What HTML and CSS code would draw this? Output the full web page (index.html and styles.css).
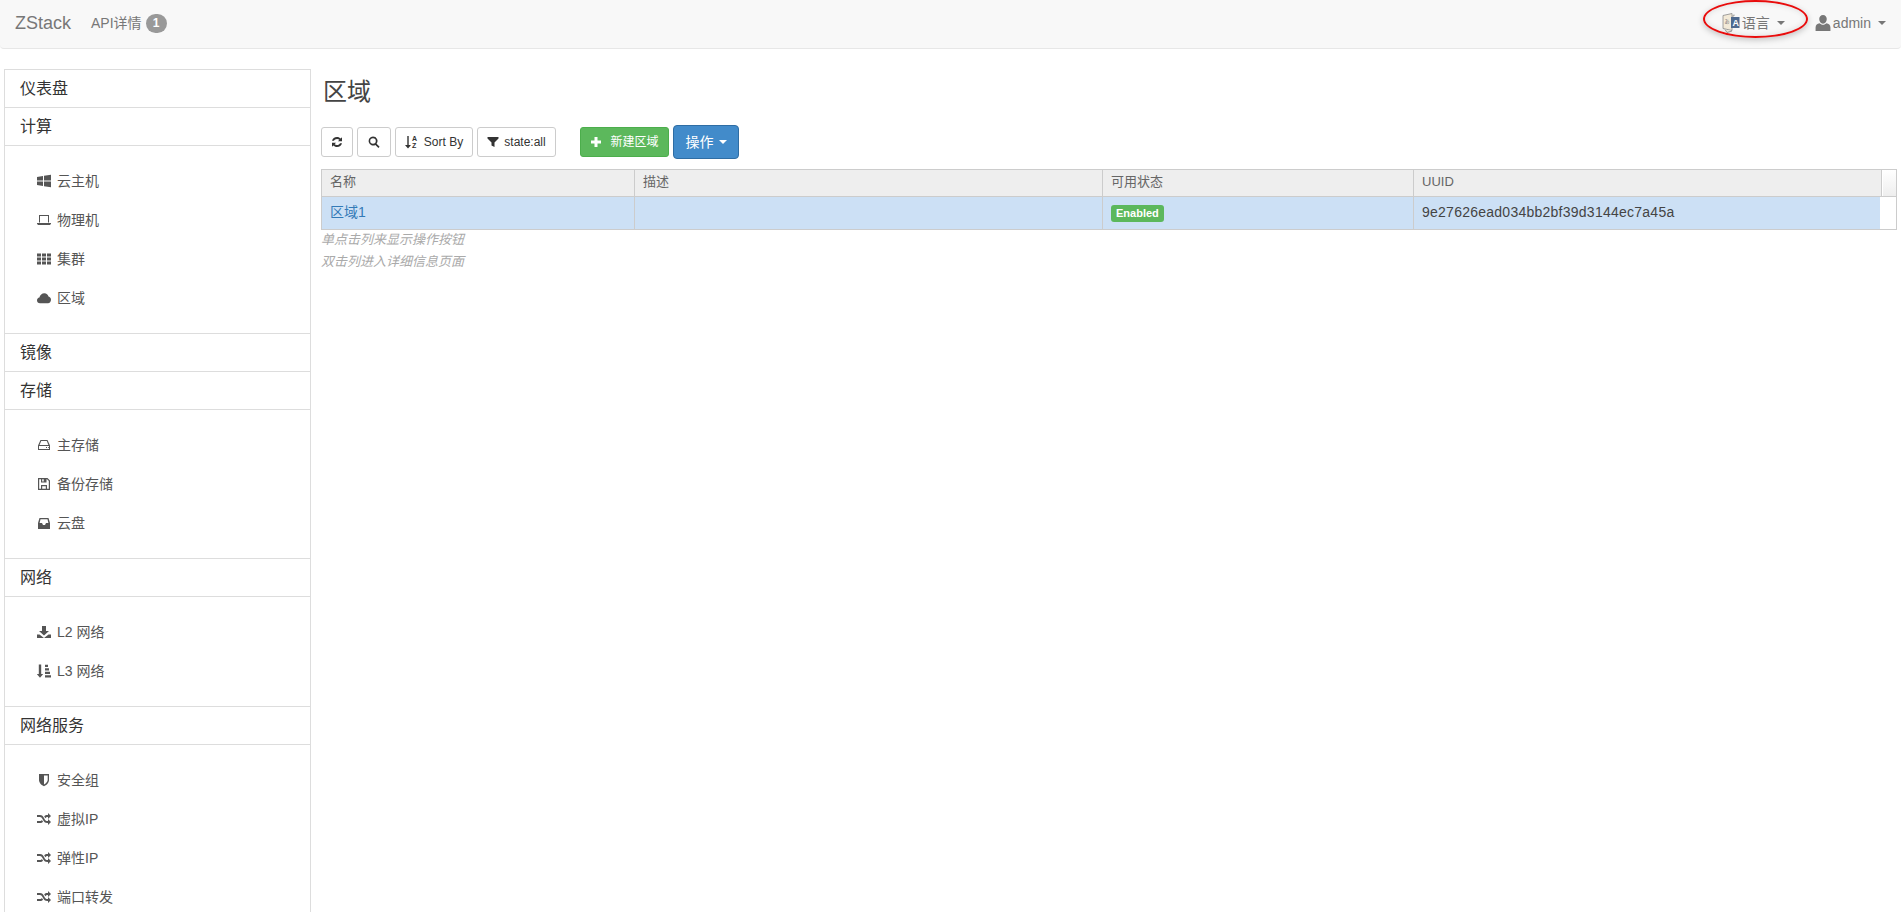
FILE: index.html
```html
<!DOCTYPE html>
<html lang="zh">
<head>
<meta charset="utf-8">
<title>ZStack</title>
<link rel="stylesheet" href="styles.css">
</head>
<body>
<svg class="sprites" width="0" height="0" aria-hidden="true">
  <symbol id="i-win" viewBox="0 0 14 14"><path d="M0 3l6-1v4.500H0zM7 1.800L14 .8v5.700H7zM0 7.500h6V12l-6-1zM7 7.500h7v5.700l-7-1z"/></symbol>
  <symbol id="i-laptop" viewBox="0 0 14 14"><path d="M2 2h10v7.500H11V3H3v6.500H2zM0 10h14v.8l-1 1.200H1L0 10.800z"/></symbol>
  <symbol id="i-th" viewBox="0 0 14 14"><path d="M0 1.500h4v3H0zM5 1.500h4v3H5zM10 1.500h4v3h-4zM0 5.500h4v3H0zM5 5.500h4v3H5zM10 5.500h4v3h-4zM0 9.500h4v3H0zM5 9.500h4v3H5zM10 9.500h4v3h-4z"/></symbol>
  <symbol id="i-cloud" viewBox="0 0 14 14"><path d="M3 12.200C1.200 12.200 0 11 0 9.400c0-1.500 1-2.600 2.400-2.800C3 4 5 2.300 7.300 2.300c2.200 0 3.700 1.300 4.200 3.300 1.500.3 2.500 1.700 2.500 3.200 0 1.900-1.300 3.400-3 3.400z"/></symbol>
  <symbol id="i-hdd" viewBox="0 0 14 14"><path d="M3.500 2h7L13 7.500V12H1V7.500zM4.200 3L2.600 7h8.800L9.800 3zM2 8v3h10V8zM9 9h1v1H9zM11 9h.8v1H11z"/></symbol>
  <symbol id="i-save" viewBox="0 0 14 14"><path fill-rule="evenodd" d="M1 1h9.500L13 3.500V13H1zM2.200 2.200v9.600H4V8h6v3.800h1.800V4L10 2.200H9.500V5.500H4V2.200zM5.200 2.200v2.200h1.500V2.200zM5.200 9.200v2.600h3.600V9.200z"/></symbol>
  <symbol id="i-inbox" viewBox="0 0 14 14"><path fill-rule="evenodd" d="M2.500 2h9L13 7v6H1V7zM3.500 3.200L2.600 7H5l1 2h2l1-2h2.400l-.9-3.800z"/></symbol>
  <symbol id="i-down" viewBox="0 0 14 14"><path d="M5 1h4v5h3L7 10.500 2 6h3zM0 9.500h2.500L7 13l4.500-3.500H14V13H0z"/></symbol>
  <symbol id="i-sortattr" viewBox="0 0 14 14"><path d="M1.800 .5h2.400v9.500H6.200L3 13.800 -.2 10h2zM8 .8h3v2.200H8zM8 4.300h4v2.200H8zM8 7.800h5V10H8zM8 11.300h6v2.200H8z"/></symbol>
  <symbol id="i-shield" viewBox="0 0 14 14"><path fill-rule="evenodd" d="M2 1h10v6c0 3-2.800 5.300-5 6.200C4.800 12.300 2 10 2 7zM7 2.400v9.100c1.700-.9 3.700-2.700 3.700-4.500V2.400z"/></symbol>
  <symbol id="i-random" viewBox="0 0 14 14"><path d="M0 3h3c2 0 3 1.200 4 3l.5.900c.8 1.300 1.400 2.100 2.900 2.100H11V7l3 3-3 3v-2h-.6c-2.400 0-3.400-1.300-4.400-3l-.5-.9C4.700 5.800 4.200 5 3 5H0zM0 9h3c.9 0 1.400-.4 1.900-1.100l1.200 1.800C5.300 10.500 4.400 11 3 11H0zM11 1l3 3-3 3V5h-.6c-.9 0-1.500.4-2 1.200L7.200 4.400C8 3.500 9 3 10.400 3H11z"/></symbol>
  <symbol id="i-refresh" viewBox="0 0 12 12"><path d="M1 4.800C1.500 2.600 3.500 1 6 1c1.500 0 2.800.6 3.700 1.500L11 1.200v4H7l1.400-1.400C7.800 3.300 7 3 6 3 4.600 3 3.500 3.700 3 4.800zM11 7.200C10.500 9.400 8.500 11 6 11c-1.500 0-2.800-.6-3.700-1.500L1 10.800v-4h4L3.600 8.200C4.200 8.700 5 9 6 9c1.400 0 2.500-.7 3-1.800z"/></symbol>
  <symbol id="i-search" viewBox="0 0 12 12"><path fill-rule="evenodd" d="M5 .5a4.500 4.500 0 0 1 3.600 7.200l3 3-1.200 1.200-3-3A4.500 4.500 0 1 1 5 .5zM5 2.200a2.800 2.800 0 1 0 0 5.600 2.800 2.800 0 0 0 0-5.600z"/></symbol>
  <symbol id="i-funnel" viewBox="0 0 12 12"><path d="M.5 1h11v1.500L7.500 6.500V11l-3-1.500v-3l-4-4z"/></symbol>
  <symbol id="i-plus" viewBox="0 0 12 12"><path d="M4.500 1h3v3.500H11v3H7.500V11h-3V7.500H1v-3h3.500z"/></symbol>
  <symbol id="i-user" viewBox="0 0 14 14"><path d="M7 0c2 0 3.300 1.500 3.300 3.600S9 7.600 7 7.600 3.700 5.700 3.700 3.600 5 0 7 0zM4 7.200C4.800 8 5.800 8.500 7 8.500s2.200-.5 3-1.300c2 .3 3.500 1.300 3.500 3.800V14H.5v-3C.5 8.500 2 7.500 4 7.200z"/></symbol>
</svg>

<header class="navbar">
  <a class="brand">ZStack</a>
  <a class="nav-link">API详情<span class="badge">1</span></a>
  <div class="nav-right">
    <a class="nav-link lang">
      <svg class="lang-icon" viewBox="0 0 18 20" width="18" height="20"><path class="lang-back" d="M1 2.500l9-2v17l-9-2z"/><path class="lang-back" d="M10 3h2v-1.500M3 16.500l2 3 5-1.500"/><path class="lang-front" d="M9 4h8.500v11H9z"/><text class="lang-a" x="10.500" y="13">A</text><text class="lang-z" x="2.500" y="10">あ</text></svg>
      <span class="nav-text">语言</span><i class="caret"></i>
    </a>
    <a class="nav-link user">
      <svg class="icon user-icon"><use href="#i-user"/></svg>admin<i class="caret"></i>
    </a>
    <span class="annotation"></span>
  </div>
</header>

<div class="layout">
  <nav class="sidebar">
    <div class="side-head">仪表盘</div>
    <div class="side-head">计算</div>
    <ul class="side-body">
      <li><svg class="icon"><use href="#i-win"/></svg>云主机</li>
      <li><svg class="icon"><use href="#i-laptop"/></svg>物理机</li>
      <li><svg class="icon"><use href="#i-th"/></svg>集群</li>
      <li><svg class="icon"><use href="#i-cloud"/></svg>区域</li>
    </ul>
    <div class="side-head">镜像</div>
    <div class="side-head">存储</div>
    <ul class="side-body">
      <li><svg class="icon"><use href="#i-hdd"/></svg>主存储</li>
      <li><svg class="icon"><use href="#i-save"/></svg>备份存储</li>
      <li><svg class="icon"><use href="#i-inbox"/></svg>云盘</li>
    </ul>
    <div class="side-head">网络</div>
    <ul class="side-body">
      <li><svg class="icon"><use href="#i-down"/></svg>L2 网络</li>
      <li><svg class="icon"><use href="#i-sortattr"/></svg>L3 网络</li>
    </ul>
    <div class="side-head">网络服务</div>
    <ul class="side-body">
      <li><svg class="icon"><use href="#i-shield"/></svg>安全组</li>
      <li><svg class="icon"><use href="#i-random"/></svg>虚拟IP</li>
      <li><svg class="icon"><use href="#i-random"/></svg>弹性IP</li>
      <li><svg class="icon"><use href="#i-random"/></svg>端口转发</li>
    </ul>
  </nav>

  <main class="content">
    <h3 class="title">区域</h3>
    <div class="toolbar">
      <button class="btn btn-icon btn-refresh"><svg class="btn-glyph"><use href="#i-refresh"/></svg></button>
      <button class="btn btn-icon btn-search"><svg class="btn-glyph"><use href="#i-search"/></svg></button>
      <button class="btn btn-sort">
        <svg class="btn-glyph" viewBox="0 0 14 14"><path d="M2.300 1h1.400v9H6l-3 3.500L0 10h2.300z"/><text class="az" x="7" y="6">A</text><text class="az" x="7" y="13">Z</text></svg>Sort By
      </button>
      <button class="btn btn-filter"><svg class="btn-glyph"><use href="#i-funnel"/></svg>state:all</button>
      <button class="btn btn-new"><svg class="btn-glyph"><use href="#i-plus"/></svg>新建区域</button>
      <button class="btn btn-action">操作<i class="caret"></i></button>
    </div>
    <div class="grid">
      <div class="grid-row grid-header">
        <div class="cell c-name">名称</div>
        <div class="cell c-desc">描述</div>
        <div class="cell c-state">可用状态</div>
        <div class="cell c-uuid">UUID</div>
        <div class="cell c-scroll"></div>
      </div>
      <div class="grid-row grid-data">
        <div class="cell c-name"><a class="row-link">区域1</a></div>
        <div class="cell c-desc"></div>
        <div class="cell c-state"><span class="label">Enabled</span></div>
        <div class="cell c-uuid">9e27626ead034bb2bf39d3144ec7a45a</div>
      </div>
    </div>
    <p class="hint">单点击列来显示操作按钮</p>
    <p class="hint">双击列进入详细信息页面</p>
  </main>
</div>
</body>
</html>
```

FILE: styles.css
```css
* { box-sizing: border-box; }
html, body { height: 100%; }
body {
  margin: 0;
  overflow: hidden;
  background: #fff;
  color: #333;
  font: 14px/20px "Liberation Sans", "Noto Sans CJK SC", sans-serif;
}
.sprites { position: absolute; }
a { color: inherit; }
ul { list-style: none; margin: 0; padding: 0; }

/* navbar */
.navbar {
  display: flex;
  align-items: center;
  height: 49px;
  padding: 0 10px 2px 15px;
  background: #f8f8f8;
  border-bottom: 1px solid #e7e7e7;
  border-radius: 0 0 4px 4px;
  color: #777;
}
.brand { font-size: 18px; width: 76px; }
.nav-link { display: flex; align-items: center; }
.badge {
  margin-left: 4px;
  min-width: 21px;
  height: 19px;
  padding: 0 7px;
  border-radius: 10px;
  background: #999;
  color: #fff;
  font-size: 12px;
  font-weight: 700;
  line-height: 19px;
  text-align: center;
}
.nav-right {
  position: relative;
  display: flex;
  align-items: center;
  margin-left: auto;
}
.lang { margin-right: 30px; }
.lang-icon { margin-right: 2px; }
.lang-back { fill: #f3ead8; stroke: #8a8a8a; stroke-width: .8; }
.lang-front { fill: #4f6a8f; }
.lang-a { fill: #fff; font-size: 9px; font-weight: 700; }
.lang-z { fill: #777; font-size: 5px; }
.user { margin-right: 5px; }
.caret {
  display: inline-block;
  margin-left: 7px;
  border-top: 4px solid;
  border-left: 4px solid transparent;
  border-right: 4px solid transparent;
}
.annotation {
  position: absolute;
  left: -19px;
  top: -13px;
  width: 105px;
  height: 38px;
  border: 2px solid #e80c0c;
  border-radius: 50%;
  box-shadow: 0 2px 6px rgba(0, 0, 0, .22), inset 0 0 6px rgba(0, 0, 0, .12);
}

/* layout */
.layout { display: flex; align-items: flex-start; }
.sidebar {
  flex: none;
  width: 307px;
  margin: 20px 0 0 4px;
  border: 1px solid #ddd;
  border-bottom: 0;
}
.side-head {
  height: 38px;
  padding-left: 15px;
  border-bottom: 1px solid #ddd;
  color: #333;
  font-size: 16px;
  line-height: 38px;
}
.side-body {
  padding: 16px 0 15px;
  border-bottom: 1px solid #ddd;
  color: #555;
}
.side-body li {
  display: flex;
  align-items: center;
  height: 39px;
  padding: 0 0 2px 32px;
}
.icon {
  flex: none;
  width: 14px;
  height: 14px;
  margin-right: 6px;
  fill: #555;
}
.user-icon { width: 16px; height: 16px; margin-right: 2px; fill: #777; }

/* content */
.content { flex: 1; min-width: 0; padding: 20px 4px 0 10px; }
.title {
  height: 56px;
  margin: 0;
  padding: 9px 0 0 2px;
  color: #444;
  font: 400 24px/28px "Liberation Serif", "Noto Sans CJK SC", serif;
}
.toolbar { display: flex; align-items: center; height: 34px; }
.btn {
  display: inline-flex;
  align-items: center;
  justify-content: center;
  height: 30px;
  margin: 0 4px 0 0;
  padding: 0;
  border: 1px solid #ccc;
  border-radius: 3px;
  background: #fff;
  color: #333;
  font: 12px/18px "Liberation Sans", "Noto Sans CJK SC", sans-serif;
}
.btn-glyph { flex: none; width: 12px; height: 12px; fill: #333; }
.btn-refresh { width: 32px; }
.btn-search { width: 34px; }
.btn-sort { width: 78px; }
.btn-filter { width: 79px; margin-right: 24px; }
.btn-sort .btn-glyph { width: 14px; height: 14px; margin-right: 5px; }
.btn-filter .btn-glyph { margin-right: 5px; }
.az { font-size: 7px; font-weight: 700; fill: #333; }
.btn-new {
  width: 89px;
  background: #5cb85c;
  border-color: #4cae4c;
  color: #fff;
}
.btn-new .btn-glyph { margin-right: 8px; fill: #fff; }
.btn-action {
  width: 66px;
  height: 34px;
  margin-right: 0;
  border-color: #2e6da4;
  border-radius: 4px;
  background: #428bca;
  color: #fff;
  font-size: 14px;
}
.btn-action .caret { margin-left: 5px; }

/* grid */
.grid { margin-top: 10px; border: 1px solid #ccc; width: 1576px; }
.grid-row { display: flex; }
.cell {
  flex: none;
  padding: 0 8px;
  border-right: 1px solid #ccc;
  overflow: hidden;
  white-space: nowrap;
}
.c-name { width: 313px; }
.c-desc { width: 468px; }
.c-state { width: 311px; }
.c-uuid { width: 468px; }
.grid-header {
  height: 27px;
  border-bottom: 1px solid #ccc;
  background: #eee;
  color: #666;
  font-size: 13px;
  line-height: 24px;
}
.c-scroll {
  flex: 1;
  padding: 0;
  border-right: 0;
  border-left: 1px solid #fff;
  background: linear-gradient(#fff, #eee);
}
.grid-data { height: 32px; line-height: 30px; color: #333; font-size: 14px; }
.grid-data .cell { background: #cce0f5; }
.grid-data .c-uuid {
  width: 466px;
  border-right: 0;
  color: #444;
  letter-spacing: .25px;
}
.row-link { color: #337ab7; font-size: 14px; }
.label {
  display: inline-block;
  height: 17px;
  padding: 0 5px;
  border-radius: 3px;
  background: #5cb85c;
  color: #fff;
  font-size: 11px;
  font-weight: 700;
  line-height: 17px;
  vertical-align: middle;
}
.hint {
  margin: 0;
  height: 22px;
  color: #aaa;
  font-size: 13px;
  font-style: italic;
  line-height: 20px;
}
```
